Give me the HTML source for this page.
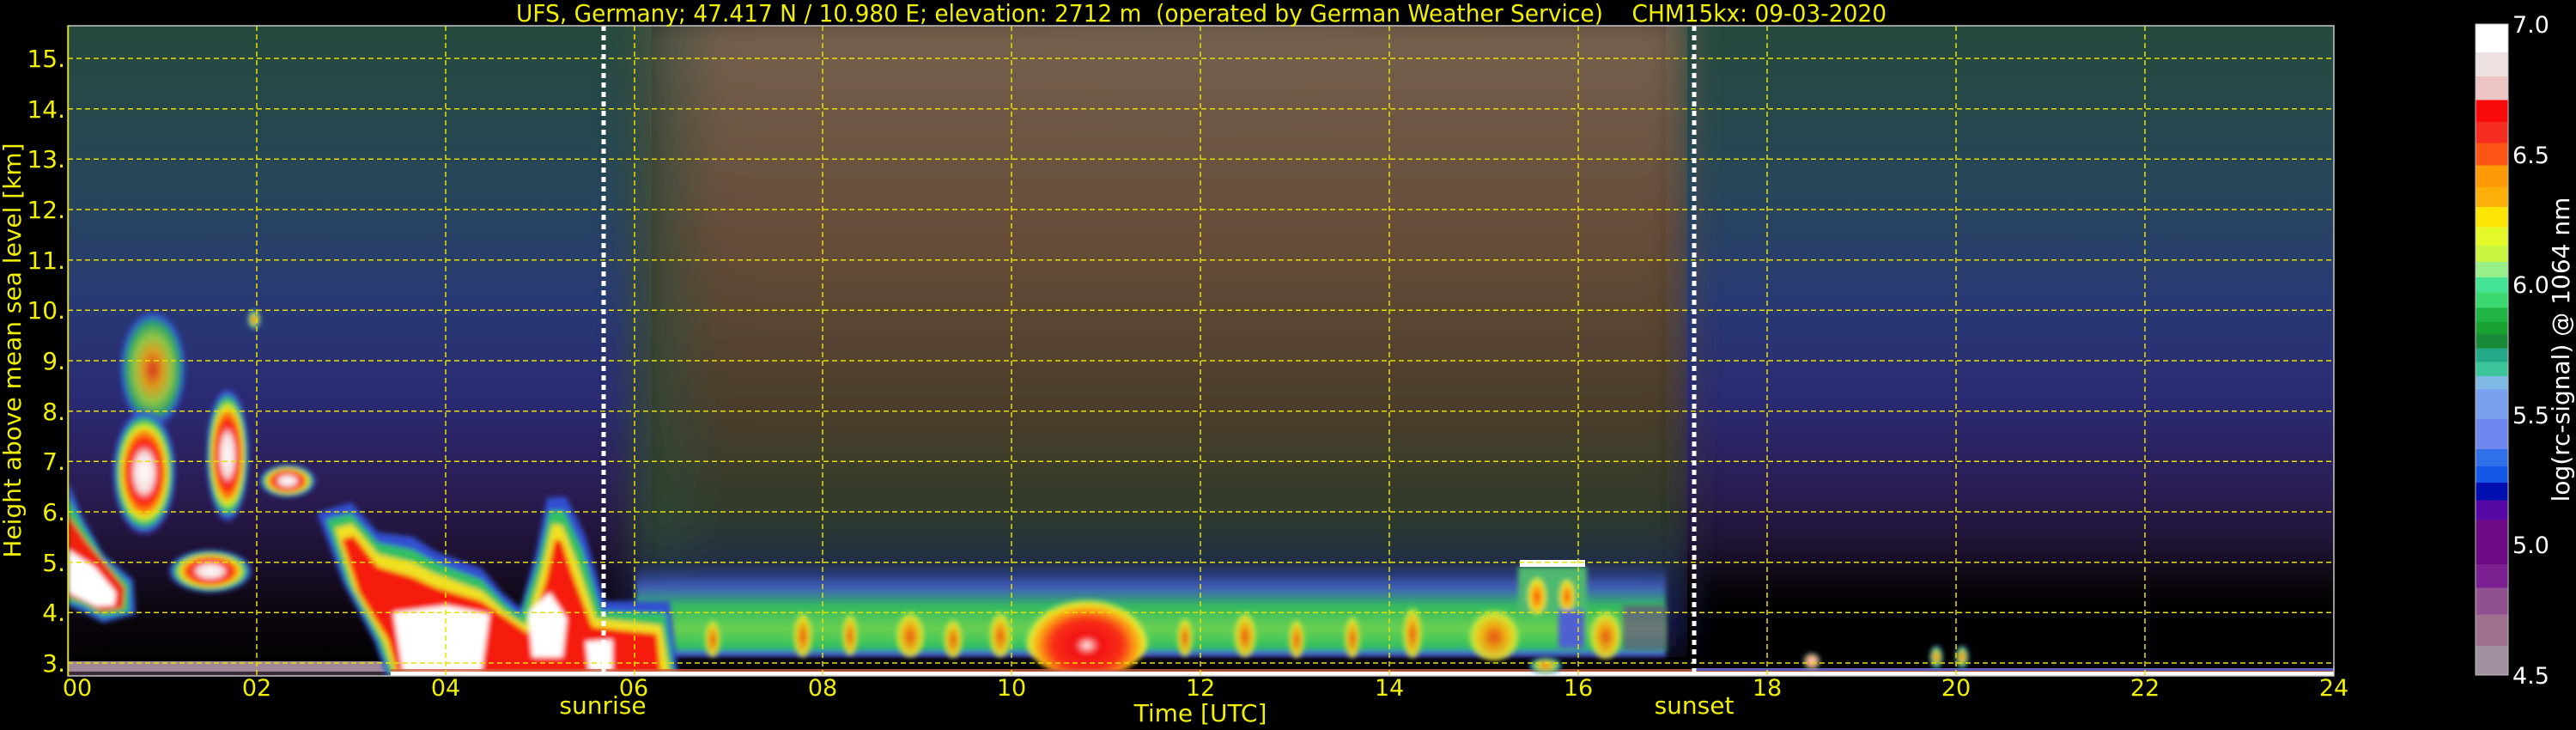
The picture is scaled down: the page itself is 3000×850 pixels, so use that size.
<!DOCTYPE html>
<html><head><meta charset="utf-8"><style>
html,body{margin:0;padding:0;background:#000;width:3000px;height:850px;overflow:hidden}
svg{display:block}
text{font-family:"DejaVu Sans","Liberation Sans",sans-serif}
</style></head><body>
<svg width="3000" height="850" viewBox="0 0 3000 850" xmlns="http://www.w3.org/2000/svg">
<defs>
<linearGradient id="sideBg" x1="0" y1="0" x2="0" y2="1">
<stop offset="0" stop-color="#25493c"/>
<stop offset="0.25" stop-color="#27465a"/>
<stop offset="0.42" stop-color="#283a74"/>
<stop offset="0.58" stop-color="#2a2a72"/>
<stop offset="0.72" stop-color="#2a1c52"/>
<stop offset="0.82" stop-color="#1c1030"/>
<stop offset="0.9" stop-color="#0c060e"/>
<stop offset="1" stop-color="#000"/>
</linearGradient>
<linearGradient id="rightBg" x1="0" y1="0" x2="0" y2="1">
<stop offset="0" stop-color="#25493c"/>
<stop offset="0.25" stop-color="#27465a"/>
<stop offset="0.42" stop-color="#283a74"/>
<stop offset="0.58" stop-color="#2a2a72"/>
<stop offset="0.72" stop-color="#2a1c52"/>
<stop offset="0.8" stop-color="#1e1232"/>
<stop offset="0.86" stop-color="#0a060c"/>
<stop offset="0.9" stop-color="#000"/>
<stop offset="1" stop-color="#000"/>
</linearGradient>
<linearGradient id="midBg" x1="0" y1="0" x2="0" y2="1">
<stop offset="0" stop-color="#766250"/>
<stop offset="0.35" stop-color="#664c38"/>
<stop offset="0.6" stop-color="#4c3e2c"/>
<stop offset="0.78" stop-color="#2e3a2c"/>
<stop offset="0.86" stop-color="#1e2c48"/>
<stop offset="0.93" stop-color="#1a2060"/>
<stop offset="1" stop-color="#101020"/>
</linearGradient>
<radialGradient id="gray" cx="0.5" cy="0" r="0.6">
<stop offset="0" stop-color="#9a9692" stop-opacity="1"/>
<stop offset="0.45" stop-color="#857a72" stop-opacity="0.85"/>
<stop offset="1" stop-color="#6a5a4a" stop-opacity="0"/>
</radialGradient>
<linearGradient id="edgeL" x1="0" y1="0" x2="1" y2="0">
<stop offset="0" stop-color="#2e4a3a" stop-opacity="0.9"/>
<stop offset="1" stop-color="#2e4a3a" stop-opacity="0"/>
</linearGradient>
<linearGradient id="band" x1="0" y1="0" x2="0" y2="1">
<stop offset="0" stop-color="#3050c0" stop-opacity="0"/>
<stop offset="0.25" stop-color="#5070e0" stop-opacity="0.7"/>
<stop offset="0.45" stop-color="#30b860"/>
<stop offset="0.7" stop-color="#6ad050"/>
<stop offset="0.9" stop-color="#30c060"/>
<stop offset="0.97" stop-color="#4060e0"/>
<stop offset="1" stop-color="#5020a0"/>
</linearGradient>
<radialGradient id="redblob" cx="0.5" cy="0.65" r="0.5">
<stop offset="0" stop-color="#ffffff"/>
<stop offset="0.2" stop-color="#f21010"/>
<stop offset="0.55" stop-color="#f83018"/>
<stop offset="0.75" stop-color="#fca010"/>
<stop offset="0.9" stop-color="#e8f030"/>
<stop offset="1" stop-color="#40d080" stop-opacity="0"/>
</radialGradient>
<radialGradient id="col" cx="0.5" cy="0.6" r="0.5">
<stop offset="0" stop-color="#f84010"/>
<stop offset="0.45" stop-color="#fcb010"/>
<stop offset="0.8" stop-color="#e0f030"/>
<stop offset="1" stop-color="#40d070" stop-opacity="0"/>
</radialGradient>
<radialGradient id="cl" cx="0.5" cy="0.5" r="0.5">
<stop offset="0" stop-color="#ffffff"/>
<stop offset="0.3" stop-color="#f4dada"/>
<stop offset="0.45" stop-color="#f81010"/>
<stop offset="0.6" stop-color="#fc8010"/>
<stop offset="0.7" stop-color="#e8f020"/>
<stop offset="0.8" stop-color="#30c060"/>
<stop offset="0.9" stop-color="#3060e0"/>
<stop offset="1" stop-color="#5020a0" stop-opacity="0"/>
</radialGradient>
<radialGradient id="clg" cx="0.5" cy="0.5" r="0.5">
<stop offset="0" stop-color="#f83010"/>
<stop offset="0.3" stop-color="#fcb010"/>
<stop offset="0.55" stop-color="#a0e040"/>
<stop offset="0.75" stop-color="#30b860"/>
<stop offset="0.9" stop-color="#3060e0"/>
<stop offset="1" stop-color="#3020a0" stop-opacity="0"/>
</radialGradient>
<linearGradient id="cbar" x1="0" y1="0" x2="0" y2="1">
<stop offset="0" stop-color="#fff"/><stop offset="0.0436" stop-color="#fff"/>
<stop offset="0.0436" stop-color="#ede0e0"/><stop offset="0.0808" stop-color="#ede0e0"/>
<stop offset="0.0808" stop-color="#ecc4c4"/><stop offset="0.1166" stop-color="#ecc4c4"/>
<stop offset="0.1166" stop-color="#f80a0a"/><stop offset="0.1502" stop-color="#f80a0a"/>
<stop offset="0.1502" stop-color="#f52d20"/><stop offset="0.1824" stop-color="#f52d20"/>
<stop offset="0.1824" stop-color="#fc5414"/><stop offset="0.2167" stop-color="#fc5414"/>
<stop offset="0.2167" stop-color="#fd9a06"/><stop offset="0.2504" stop-color="#fd9a06"/>
<stop offset="0.2504" stop-color="#fdb00a"/><stop offset="0.2811" stop-color="#fdb00a"/>
<stop offset="0.2811" stop-color="#fde605"/><stop offset="0.3119" stop-color="#fde605"/>
<stop offset="0.3119" stop-color="#e5f82a"/><stop offset="0.3405" stop-color="#e5f82a"/>
<stop offset="0.3405" stop-color="#c8f540"/><stop offset="0.3655" stop-color="#c8f540"/>
<stop offset="0.3655" stop-color="#98f08a"/><stop offset="0.3891" stop-color="#98f08a"/>
<stop offset="0.3891" stop-color="#44e494"/><stop offset="0.412" stop-color="#44e494"/>
<stop offset="0.412" stop-color="#3cd870"/><stop offset="0.4363" stop-color="#3cd870"/>
<stop offset="0.4363" stop-color="#20b444"/><stop offset="0.4578" stop-color="#20b444"/>
<stop offset="0.4578" stop-color="#18a030"/><stop offset="0.4764" stop-color="#18a030"/>
<stop offset="0.4764" stop-color="#188a38"/><stop offset="0.4979" stop-color="#188a38"/>
<stop offset="0.4979" stop-color="#24a888"/><stop offset="0.5193" stop-color="#24a888"/>
<stop offset="0.5193" stop-color="#3cc49a"/><stop offset="0.5408" stop-color="#3cc49a"/>
<stop offset="0.5408" stop-color="#80b8e4"/><stop offset="0.5608" stop-color="#80b8e4"/>
<stop offset="0.5608" stop-color="#7aa0f0"/><stop offset="0.6066" stop-color="#7aa0f0"/>
<stop offset="0.6066" stop-color="#6e88f0"/><stop offset="0.6531" stop-color="#6e88f0"/>
<stop offset="0.6531" stop-color="#3070e8"/><stop offset="0.6795" stop-color="#3070e8"/>
<stop offset="0.6795" stop-color="#1458e8"/><stop offset="0.7046" stop-color="#1458e8"/>
<stop offset="0.7046" stop-color="#0010b0"/><stop offset="0.7318" stop-color="#0010b0"/>
<stop offset="0.7318" stop-color="#5808a4"/><stop offset="0.7618" stop-color="#5808a4"/>
<stop offset="0.7618" stop-color="#6e0a84"/><stop offset="0.8298" stop-color="#6e0a84"/>
<stop offset="0.8298" stop-color="#7a2090"/><stop offset="0.8662" stop-color="#7a2090"/>
<stop offset="0.8662" stop-color="#905090"/><stop offset="0.907" stop-color="#905090"/>
<stop offset="0.907" stop-color="#a07090"/><stop offset="0.9549" stop-color="#a07090"/>
<stop offset="0.9549" stop-color="#a090a0"/><stop offset="1" stop-color="#a090a0"/>
</linearGradient>
<filter id="b3" x="-20%" y="-20%" width="140%" height="140%"><feGaussianBlur stdDeviation="3"/></filter>
<filter id="b20" x="-10%" y="-10%" width="120%" height="120%"><feGaussianBlur stdDeviation="20"/></filter>
<clipPath id="plot"><rect x="79" y="30" width="2639" height="757"/></clipPath>
</defs>

<g clip-path="url(#plot)">
<rect x="79" y="30" width="680" height="757" fill="url(#sideBg)"/>
<rect x="1940" y="30" width="780" height="757" fill="url(#rightBg)"/>
<g filter="url(#b20)">
<rect x="736" y="10" width="1229" height="760" fill="url(#midBg)"/>
<ellipse cx="1400" cy="40" rx="500" ry="600" fill="url(#gray)"/>
<rect x="736" y="10" width="100" height="640" fill="url(#edgeL)"/>
</g>
<rect x="1965" y="30" width="10" height="757" fill="url(#rightBg)"/>
<rect x="79" y="765" width="2639" height="22" fill="#000"/>

<rect x="79" y="770" width="380" height="12" fill="#a08898"/>
<rect x="79" y="782" width="380" height="5" fill="#3a2a38"/>

<g filter="url(#b3)">
<rect x="740" y="655" width="1200" height="110" fill="url(#band)"/>
</g>
<g filter="url(#b3)" opacity="0.9">
<ellipse cx="830" cy="740" rx="10" ry="25" fill="url(#col)"/>
<ellipse cx="935" cy="735" rx="12" ry="30" fill="url(#col)"/>
<ellipse cx="990" cy="735" rx="10" ry="28" fill="url(#col)"/>
<ellipse cx="1060" cy="735" rx="18" ry="30" fill="url(#col)"/>
<ellipse cx="1110" cy="740" rx="12" ry="26" fill="url(#col)"/>
<ellipse cx="1165" cy="735" rx="14" ry="30" fill="url(#col)"/>
<ellipse cx="1380" cy="738" rx="10" ry="26" fill="url(#col)"/>
<ellipse cx="1450" cy="735" rx="14" ry="30" fill="url(#col)"/>
<ellipse cx="1510" cy="740" rx="10" ry="26" fill="url(#col)"/>
<ellipse cx="1575" cy="738" rx="10" ry="28" fill="url(#col)"/>
<ellipse cx="1645" cy="732" rx="12" ry="34" fill="url(#col)"/>
<ellipse cx="1740" cy="735" rx="32" ry="34" fill="url(#col)"/>
<ellipse cx="1870" cy="735" rx="20" ry="32" fill="url(#col)"/>
</g>
<ellipse cx="1266" cy="735" rx="75" ry="55" fill="url(#redblob)" filter="url(#b3)"/>
<g filter="url(#b3)">
<rect x="1768" y="660" width="80" height="55" fill="#50b870"/>
<ellipse cx="1790" cy="690" rx="12" ry="25" fill="url(#col)"/>
<ellipse cx="1825" cy="690" rx="10" ry="22" fill="url(#col)"/>
<rect x="1815" y="710" width="30" height="45" fill="#5060d0"/>
<rect x="1890" y="705" width="50" height="52" fill="#6a3a8a" opacity="0.6"/>
</g>
<rect x="1770" y="652" width="76" height="8" fill="#fff"/>

<g filter="url(#b3)">
<polygon points="79,560 95,600 120,645 155,675 158,715 120,725 95,712 79,705" fill="#3060d0"/>
<polygon points="79,580 98,615 122,652 150,680 150,712 120,718 96,705 79,700" fill="#30c060"/>
<polygon points="79,600 100,630 125,660 145,685 143,708 118,712 96,700 79,694" fill="#f02010"/>
<polygon points="79,640 110,660 135,690 133,705 112,706 90,695 79,690" fill="#fff"/>
</g>
<g filter="url(#b3)">
<ellipse cx="178" cy="430" rx="40" ry="70" fill="url(#clg)" opacity="0.85"/>
<ellipse cx="168" cy="550" rx="38" ry="75" fill="url(#cl)"/>
<ellipse cx="265" cy="530" rx="26" ry="80" fill="url(#cl)"/>
<ellipse cx="296" cy="372" rx="8" ry="12" fill="url(#clg)"/>
<ellipse cx="245" cy="665" rx="50" ry="26" fill="url(#cl)"/>
<ellipse cx="335" cy="560" rx="34" ry="20" fill="url(#cl)"/>
</g>
<g filter="url(#b3)">
<polygon points="369,597 409,585 440,620 481,625 507,642 561,662 585,690 606,708 625,640 637,580 659,578 682,625 704,700 780,700 790,787 450,787 436,747 400,680" fill="#3050d0"/>
<polygon points="380,605 409,598 440,632 481,640 507,655 561,675 585,700 606,718 628,650 640,595 657,595 678,640 700,712 775,714 785,787 455,787 440,745 405,680" fill="#30c060"/>
<polygon points="390,615 410,610 440,645 481,655 507,668 561,688 590,714 612,728 632,660 643,610 655,612 672,655 694,720 770,728 780,787 460,787 446,745 412,685" fill="#f0e020"/>
<polygon points="398,628 412,624 440,660 481,672 507,684 561,700 596,724 616,738 636,675 646,628 654,630 668,672 690,730 765,738 770,787 464,787 452,745 418,690" fill="#f51a10"/>
<polygon points="458,713 520,705 570,715 560,787 470,787" fill="#fff"/>
<polygon points="615,713 640,690 660,720 655,765 620,765" fill="#fff"/>
<polygon points="682,747 713,745 713,782 686,782" fill="#fff"/>
</g>
<rect x="455" y="779" width="2263" height="3" fill="#d06040" opacity="0.8"/>
<rect x="455" y="782" width="2263" height="5" fill="#ffffff"/>
<rect x="1970" y="778" width="748" height="3" fill="#6060c0"/>
<g filter="url(#b3)">
<ellipse cx="2110" cy="770" rx="10" ry="10" fill="url(#cl)"/>
<ellipse cx="2255" cy="765" rx="8" ry="14" fill="url(#clg)"/>
<ellipse cx="2285" cy="765" rx="8" ry="14" fill="url(#clg)"/>
<ellipse cx="1800" cy="775" rx="20" ry="10" fill="url(#clg)"/>
</g>

<g stroke="#e8e000" stroke-width="1.5" stroke-dasharray="6,4" fill="none">
<line x1="79" y1="772" x2="2718" y2="772"/>
<line x1="79" y1="713.3" x2="2718" y2="713.3"/>
<line x1="79" y1="654.7" x2="2718" y2="654.7"/>
<line x1="79" y1="596" x2="2718" y2="596"/>
<line x1="79" y1="537.3" x2="2718" y2="537.3"/>
<line x1="79" y1="478.7" x2="2718" y2="478.7"/>
<line x1="79" y1="420" x2="2718" y2="420"/>
<line x1="79" y1="361.3" x2="2718" y2="361.3"/>
<line x1="79" y1="302.7" x2="2718" y2="302.7"/>
<line x1="79" y1="244" x2="2718" y2="244"/>
<line x1="79" y1="185.3" x2="2718" y2="185.3"/>
<line x1="79" y1="126.7" x2="2718" y2="126.7"/>
<line x1="79" y1="68" x2="2718" y2="68"/>
<line x1="299" y1="30" x2="299" y2="787"/>
<line x1="519" y1="30" x2="519" y2="787"/>
<line x1="739" y1="30" x2="739" y2="787"/>
<line x1="958" y1="30" x2="958" y2="787"/>
<line x1="1178" y1="30" x2="1178" y2="787"/>
<line x1="1398" y1="30" x2="1398" y2="787"/>
<line x1="1618" y1="30" x2="1618" y2="787"/>
<line x1="1838" y1="30" x2="1838" y2="787"/>
<line x1="2058" y1="30" x2="2058" y2="787"/>
<line x1="2278" y1="30" x2="2278" y2="787"/>
<line x1="2498" y1="30" x2="2498" y2="787"/>
</g>
<g stroke="#ffffff" stroke-width="5" stroke-dasharray="6,5">
<line x1="703" y1="30" x2="703" y2="787"/>
<line x1="1973" y1="30" x2="1973" y2="787"/>
</g>
</g>
<rect x="79" y="30" width="2639" height="757" fill="none" stroke="#c8c8c8" stroke-width="1.5"/>
<line x1="79.5" y1="30" x2="79.5" y2="787" stroke="#e8e000" stroke-width="1.5"/>

<text x="601" y="25" font-size="28" fill="#f0f000" textLength="1596" lengthAdjust="spacingAndGlyphs" xml:space="preserve">UFS, Germany; 47.417 N / 10.980 E; elevation: 2712 m  (operated by German Weather Service)    CHM15kx: 09-03-2020</text>

<g font-size="28" fill="#f0f000" text-anchor="end">
<text x="76" y="782">3.</text>
<text x="76" y="723">4.</text>
<text x="76" y="665">5.</text>
<text x="76" y="606">6.</text>
<text x="76" y="547">7.</text>
<text x="76" y="489">8.</text>
<text x="76" y="430">9.</text>
<text x="76" y="371">10.</text>
<text x="76" y="313">11.</text>
<text x="76" y="254">12.</text>
<text x="76" y="195">13.</text>
<text x="76" y="137">14.</text>
<text x="76" y="78">15.</text>
</g>
<text transform="translate(24,408) rotate(-90)" font-size="28" fill="#f0f000" text-anchor="middle">Height above mean sea level [km]</text>

<g font-size="27" fill="#f0f000" text-anchor="middle">
<text x="90" y="810">00</text>
<text x="299" y="810">02</text>
<text x="519" y="810">04</text>
<text x="738" y="810">06</text>
<text x="958" y="810">08</text>
<text x="1178" y="810">10</text>
<text x="1398" y="810">12</text>
<text x="1618" y="810">14</text>
<text x="1838" y="810">16</text>
<text x="2058" y="810">18</text>
<text x="2278" y="810">20</text>
<text x="2498" y="810">22</text>
<text x="2718" y="810">24</text>
<text x="702" y="831" font-size="28">sunrise</text>
<text x="1973" y="831" font-size="28">sunset</text>
<text x="1398" y="840" font-size="28">Time [UTC]</text>
</g>

<rect x="2883" y="28" width="38" height="758" fill="url(#cbar)" stroke="#c0c0c0" stroke-width="1"/>
<g font-size="27" fill="#ffffff">
<text x="2926" y="38">7.0</text>
<text x="2926" y="190">6.5</text>
<text x="2926" y="341">6.0</text>
<text x="2926" y="493">5.5</text>
<text x="2926" y="644">5.0</text>
<text x="2926" y="796">4.5</text>
</g>
<text transform="translate(2992,407) rotate(-90)" font-size="28" fill="#ffffff" text-anchor="middle">log(rc-signal) @ 1064 nm</text>
</svg>
</body></html>
